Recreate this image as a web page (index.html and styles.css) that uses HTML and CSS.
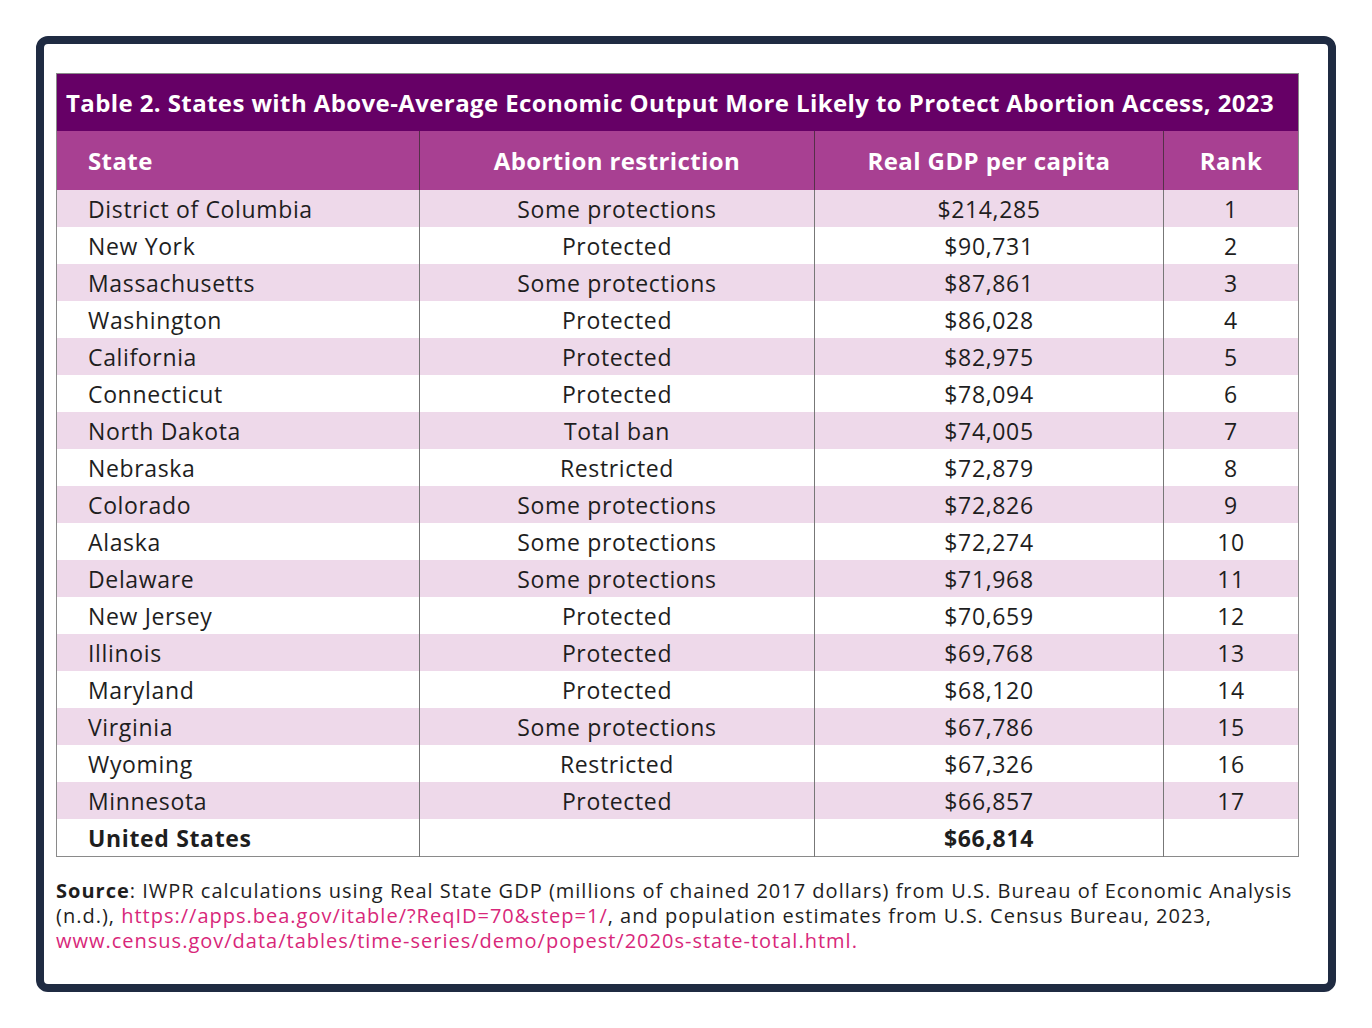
FILE: index.html
```html
<!DOCTYPE html>
<html lang="en">
<head>
<meta charset="UTF-8">
<meta name="viewport" content="width=device-width, initial-scale=1.0">
<title>Table 2 - Real GDP per capita</title>
<link rel="stylesheet" href="styles.css">
</head>
<body>

<div class="frame">
    <table class="data-table">
        <thead>
            <tr class="title-row">
                <th colspan="4">Table 2. States with Above-Average Economic Output More Likely to Protect Abortion Access, 2023</th>
            </tr>
            <tr class="head-row">
                <th class="col-state">State</th>
                <th class="col-restr">Abortion restriction</th>
                <th class="col-gdp">Real GDP per capita</th>
                <th class="col-rank">Rank</th>
            </tr>
        </thead>
        <tbody>
            <tr><td>District of Columbia</td><td>Some protections</td><td>$214,285</td><td>1</td></tr>
            <tr><td>New York</td><td>Protected</td><td>$90,731</td><td>2</td></tr>
            <tr><td>Massachusetts</td><td>Some protections</td><td>$87,861</td><td>3</td></tr>
            <tr><td>Washington</td><td>Protected</td><td>$86,028</td><td>4</td></tr>
            <tr><td>California</td><td>Protected</td><td>$82,975</td><td>5</td></tr>
            <tr><td>Connecticut</td><td>Protected</td><td>$78,094</td><td>6</td></tr>
            <tr><td>North Dakota</td><td>Total ban</td><td>$74,005</td><td>7</td></tr>
            <tr><td>Nebraska</td><td>Restricted</td><td>$72,879</td><td>8</td></tr>
            <tr><td>Colorado</td><td>Some protections</td><td>$72,826</td><td>9</td></tr>
            <tr><td>Alaska</td><td>Some protections</td><td>$72,274</td><td>10</td></tr>
            <tr><td>Delaware</td><td>Some protections</td><td>$71,968</td><td>11</td></tr>
            <tr><td>New Jersey</td><td>Protected</td><td>$70,659</td><td>12</td></tr>
            <tr><td>Illinois</td><td>Protected</td><td>$69,768</td><td>13</td></tr>
            <tr><td>Maryland</td><td>Protected</td><td>$68,120</td><td>14</td></tr>
            <tr><td>Virginia</td><td>Some protections</td><td>$67,786</td><td>15</td></tr>
            <tr><td>Wyoming</td><td>Restricted</td><td>$67,326</td><td>16</td></tr>
            <tr><td>Minnesota</td><td>Protected</td><td>$66,857</td><td>17</td></tr>
            <tr class="total-row"><td>United States</td><td></td><td>$66,814</td><td></td></tr>
        </tbody>
    </table>

    <p class="source">
        <b>Source</b>: IWPR calculations using Real State GDP (millions of chained 2017 dollars) from U.S. Bureau of Economic Analysis<br>
        (n.d.), <a href="#">https://apps.bea.gov/itable/?ReqID=70&amp;step=1/</a>, and population estimates from U.S. Census Bureau, 2023,<br>
        <a href="#">www.census.gov/data/tables/time-series/demo/popest/2020s-state-total.html.</a>
    </p>
</div>

</body>
</html>
```

FILE: styles.css
```css
body {
    margin: 0;
    padding: 36px;
    font-family: "Open Sans", Lato, sans-serif;
    background-color: white;
    color: #1e1e1e;
}
.frame {
    width: 1300px;
    height: 956px;
    border: 8px solid #1f2b42;
    border-radius: 12px;
    padding: 29px 0 0 12px;
    box-sizing: border-box;
}
.data-table {
    width: 1243px;
    border-collapse: collapse;
    border: 1px solid #8a8a8a;
}
.title-row th {
    background-color: #660066;
    color: white;
    font-size: 24px;
    font-weight: 700;
    letter-spacing: 0.4px;
    text-align: left;
    padding: 0 9px;
    height: 57px;
    white-space: nowrap;
}
.head-row th {
    background-color: #a84092;
    color: white;
    font-size: 24px;
    font-weight: 700;
    letter-spacing: 0.4px;
    height: 59px;
    padding: 0;
    border-left: 1px solid #553048;
}
.head-row th:first-child {
    border-left: none;
}
.col-state {
    width: 331px;
    text-align: left;
    padding-left: 31px !important;
}
.col-restr {
    width: 394px;
}
.col-gdp {
    width: 348px;
}
.data-table td {
    height: 37px;
    padding: 0;
    font-size: 23px;
    letter-spacing: 0.65px;
    text-align: center;
    border-left: 1px solid #777;
}
.data-table td:first-child {
    text-align: left;
    padding-left: 31px;
    border-left: none;
}
.data-table tbody tr:nth-child(odd) {
    background-color: #eed9ea;
}
.total-row td {
    font-weight: 700;
}
.source {
    margin: 21px 0 0;
    font-size: 20px;
    letter-spacing: 1px;
    line-height: 25px;
    white-space: nowrap;
}
.source a {
    color: #d8277a;
    text-decoration: none;
}
```
